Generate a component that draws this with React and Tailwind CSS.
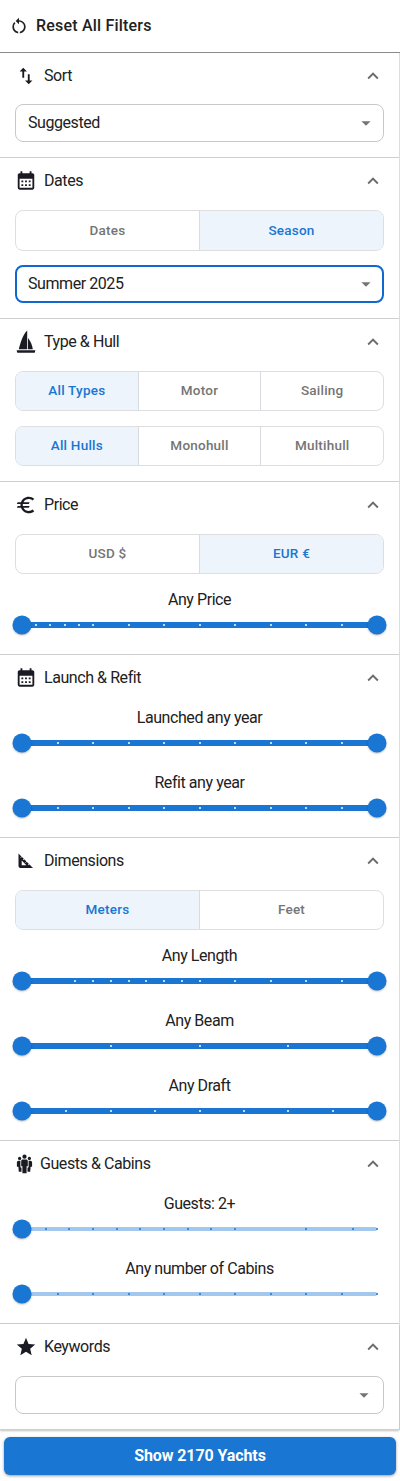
import React, { useState } from 'react';
import clsx from 'clsx';
import {
  MdArrowDropDown,
  MdCalendarMonth,
  MdEuro,
  MdExpandLess,
  MdImportExport,
  MdRestartAlt,
  MdStar,
} from 'react-icons/md';

const everyTenth = [10, 20, 30, 40, 50, 60, 70, 80, 90];

const SailIcon = () => (
  <svg width="20" height="24" viewBox="0 0 20 24" fill="currentColor">
    <path d="M11.2.5v18.700H2.800C4.500 13 6.500 5 11.200.5z" />
    <path d="M12 8c2.400 3 4.200 6.700 4.800 11.200H12z" />
    <path d="M.6 20.200h18.800l-.7 2.600H1.300z" />
  </svg>
);

const RulerIcon = () => (
  <svg width="20" height="20" viewBox="0 0 20 20" fill="currentColor" fillRule="evenodd">
    <path d="M2.500 2.500 17 17H4.500a2 2 0 0 1-2-2zM5.700 9.500v4.700h4.700z" />
    <path
      d="m4.800 6.600 1.400-1.400M7.200 9l1.400-1.400M9.700 11.500l1.400-1.400M12.200 14l1.400-1.400"
      stroke="#fff"
      strokeWidth="0.900"
    />
  </svg>
);

const PeopleIcon = () => (
  <svg width="17" height="20" viewBox="0 0 17 20" fill="currentColor">
    <circle cx="8.500" cy="2.700" r="2.100" />
    <circle cx="3.600" cy="4.400" r="1.600" />
    <circle cx="13.400" cy="4.400" r="1.600" />
    <path d="M6.800 5.600h3.400c1 0 1.600.7 1.600 1.600v5h-1.200v7H6.400v-7H5.200v-5c0-.9.6-1.600 1.600-1.600z" />
    <path d="M4.400 6.800v6.400l1.100.5v4H2.800l-.4-4.900H.9V8.600c0-1 .8-1.800 1.800-1.800zM12.600 6.800v6.400l-1.100.5v4h2.700l.4-4.900h1.500V8.600c0-1-.8-1.800-1.800-1.800z" />
  </svg>
);

const Section = ({ icon, title, children, className, iconClass = 'w-[22px]' }) => {
  const [open, setOpen] = useState(true);

  return (
    <section className={clsx('border-b border-[#cfcfcf] px-[15px]', className)}>
      <button
        className="flex h-[45px] w-full items-center text-left"
        onClick={() => setOpen(!open)}
      >
        <span className={clsx('flex shrink-0 items-center justify-center text-[#1a1a22]', iconClass)}>
          {icon}
        </span>
        <span className="flex-1 pl-[7px] text-[16px] tracking-[-0.43px]">{title}</span>
        <MdExpandLess className="size-[22px] text-[#6b6b6b]" />
      </button>
      {open && children}
    </section>
  );
};

const Toggle = ({ options, initial, className }) => {
  const [selected, setSelected] = useState(initial);

  return (
    <div className={clsx('flex overflow-hidden rounded-[8px] border border-[#dedede]', className)}>
      {options.map((option, index) => (
        <button
          key={option}
          onClick={() => setSelected(option)}
          className={clsx(
            'flex-1 pb-px text-[13.5px] font-medium tracking-[0.22px]',
            index > 0 && 'border-l border-[#d8dce2]',
            selected === option ? 'bg-[#edf4fc] text-[#1976d2]' : 'text-[#757575]'
          )}
        >
          {option}
        </button>
      ))}
    </div>
  );
};

const Select = ({ value, focused, className }) => (
  <div
    className={clsx(
      'flex h-[38px] items-center justify-between rounded-[8px]',
      focused ? 'border-2 border-[#1068cf] pr-[5px] pl-[11px]' : 'border border-[#c8c8c8] pl-3',
      !focused && (value ? 'pr-[6px]' : 'pr-2'),
      className
    )}
  >
    <span className="text-[16px] tracking-[-0.43px]">{value}</span>
    <MdArrowDropDown className="size-[22px] text-[#757575]" />
  </div>
);

const Thumb = ({ className }) => (
  <span
    className={clsx(
      'absolute top-1/2 size-[19px] -translate-1/2 rounded-full bg-[#1976d2] shadow-[0_1px_2px_rgba(0,0,0,0.25)]',
      className
    )}
  />
);

const Slider = ({ label, marks, single }) => (
  <div className="flex h-[65px] flex-col">
    <div className="flex h-[36px] items-center justify-center text-[16px] tracking-[-0.43px]">
      {label}
    </div>
    <div className="relative mx-[7px] flex h-[14px] items-center">
      <div className={clsx('w-full rounded-full', single ? 'h-1 bg-[#a3c8ed]' : 'h-[6px] bg-[#1976d2]')} />
      {marks.map((mark) => (
        <span
          key={mark}
          className={clsx(
            'absolute top-1/2 size-[2px] -translate-1/2 rounded-full',
            single ? 'bg-[#1976d2]' : 'bg-white'
          )}
          style={{ left: `${mark}%` }}
        />
      ))}
      <Thumb className="left-0" />
      {!single && <Thumb className="left-full" />}
    </div>
  </div>
);

const App = () => {
  return (
    <main className="h-[1481px] w-[400px] bg-white font-['Roboto',sans-serif] text-[#212121]">
      <header className="flex h-[53px] items-center border-b border-[#8a8a8a] pl-[9px]">
        <MdRestartAlt className="size-[20px]" />
        <span className="pl-[7px] text-[16px] font-medium tracking-[0.2px]">Reset All Filters</span>
      </header>

      <div className="border-r border-[#dcdcdc]">
        <Section icon={<MdImportExport size={22} />} title="Sort" className="h-[105px]">
          <Select value="Suggested" className="mt-[6px]" />
        </Section>

        <Section icon={<MdCalendarMonth size={23} />} title="Dates" className="h-[161px]">
          <Toggle options={['Dates', 'Season']} initial="Season" className="mt-[7px] h-[41px]" />
          <Select value="Summer 2025" focused className="mt-[14px]" />
        </Section>

        <Section icon={<SailIcon />} title="Type & Hull" className="h-[163px]">
          <Toggle options={['All Types', 'Motor', 'Sailing']} initial="All Types" className="mt-[7px] h-10" />
          <Toggle options={['All Hulls', 'Monohull', 'Multihull']} initial="All Hulls" className="mt-[15px] h-10" />
        </Section>

        <Section icon={<MdEuro size={22} />} title="Price" className="h-[173px]">
          <Toggle options={['USD $', 'EUR €']} initial="EUR €" className="mt-[7px] mb-2 h-10" />
          <Slider label="Any Price" marks={[4, 8, 12, 16, 20, 30, 40, 50, 60, 70, 80, 90]} />
        </Section>

        <Section icon={<MdCalendarMonth size={23} />} title="Launch & Refit" className="h-[183px]">
          <Slider label="Launched any year" marks={everyTenth} />
          <Slider label="Refit any year" marks={everyTenth} />
        </Section>

        <Section icon={<RulerIcon />} title="Dimensions" className="h-[303px]">
          <Toggle options={['Meters', 'Feet']} initial="Meters" className="mt-[7px] mb-2 h-10" />
          <Slider label="Any Length" marks={[15, 20, 25, 30, 35, 40, 45, 50, 60, 70, 80, 90]} />
          <Slider label="Any Beam" marks={[25, 50, 75]} />
          <Slider label="Any Draft" marks={[12.5, 25, 37.5, 50, 62.5, 75, 87.5]} />
        </Section>

        <Section
          icon={<PeopleIcon />}
          iconClass="w-[18px]"
          title="Guests & Cabins"
          className="h-[183px]"
        >
          <Slider
            single
            label="Guests: 2+"
            marks={[6.67, 13.33, 20, 26.67, 33.33, 40, 46.67, 53.33, 60, 80, 93.33, 100]}
          />
          <Slider single label="Any number of Cabins" marks={[...everyTenth, 100]} />
        </Section>

        <Section icon={<MdStar size={22} />} title="Keywords" className="h-[106px] shadow-[0_1px_2px_rgba(0,0,0,0.25)]">
          <Select value="" className="mt-[7px]" />
        </Section>
      </div>

      <footer className="px-1 pt-[7px]">
        <button className="h-[38px] w-full rounded-[6px] bg-[#1976d2] text-[16px] font-bold tracking-[-0.1px] text-white shadow-[0_1px_3px_rgba(0,0,0,0.4)]">
          Show 2170 Yachts
        </button>
      </footer>
    </main>
  );
};

export default App;
